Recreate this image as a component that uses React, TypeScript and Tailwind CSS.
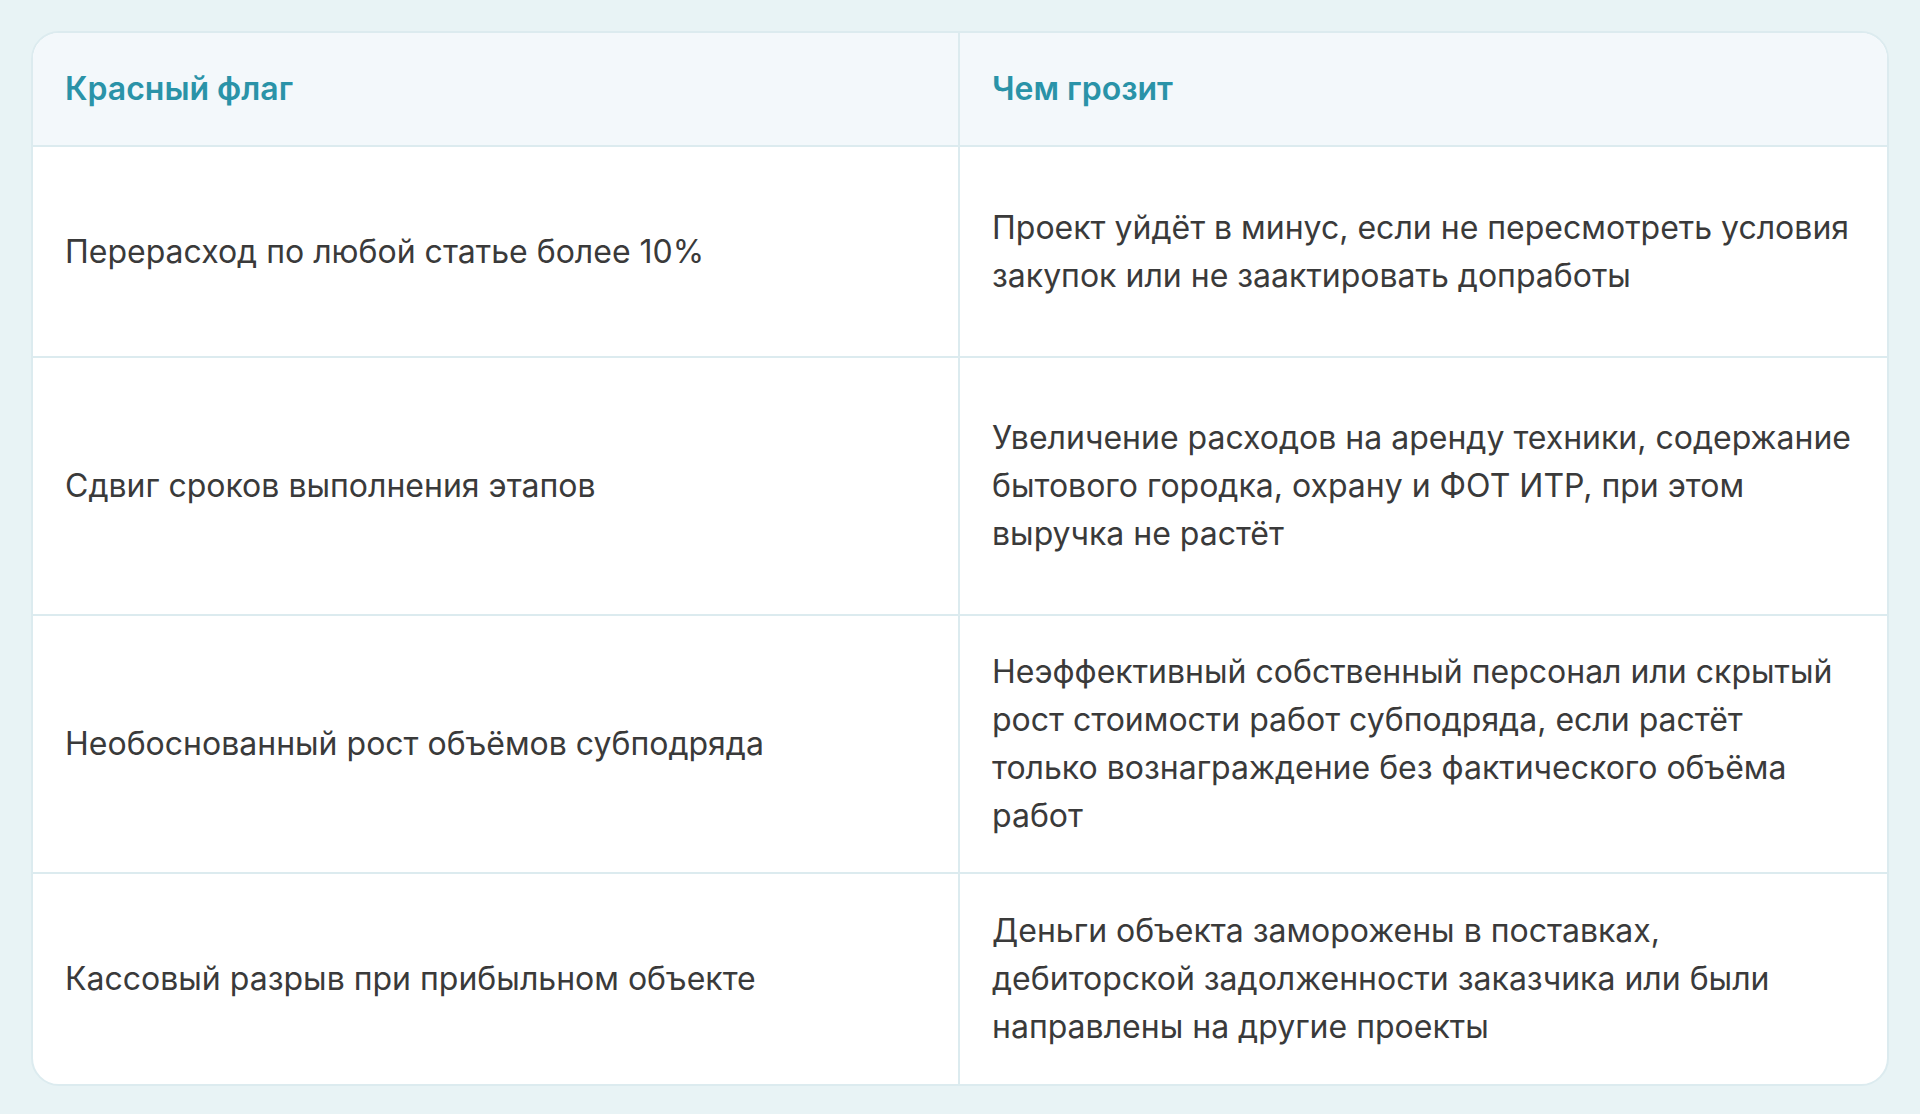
export default function App() {
  const rows: [string, string, string][] = [
    ["Перерасход по любой статье более 10%", "Проект уйдёт в минус, если не пересмотреть условия закупок или не заактировать допработы", "h-[211px]"],
    ["Сдвиг сроков выполнения этапов", "Увеличение расходов на аренду техники, содержание бытового городка, охрану и ФОТ ИТР, при этом выручка не растёт", "h-[258px]"],
    ["Необоснованный рост объёмов субподряда", "Неэффективный собственный персонал или скрытый рост стоимости работ субподряда, если растёт только вознаграждение без фактического объёма работ", "h-[258px]"],
    ["Кассовый разрыв при прибыльном объекте", "Деньги объекта заморожены в поставках, дебиторской задолженности заказчика или были направлены на другие проекты", "h-[210px]"],
  ];
  return (
    <div className="w-[1920px] h-[1114px] bg-[#e8f3f5] p-[31px]" style={{ fontFamily: "Inter, 'Noto Sans', sans-serif" }}>
      <div className="w-[1858px] rounded-[28px] border-2 border-[#dcebef] bg-white overflow-hidden">
        <div className="grid grid-cols-2 h-[114px] bg-[#f3f8fb] border-b-2 border-[#dcebef] text-[32px] font-semibold text-[#2a93a8]">
          <div className="flex items-center px-[32px] border-r-2 border-[#dcebef]">Красный флаг</div>
          <div className="flex items-center px-[32px]">Чем грозит</div>
        </div>
        {rows.map(([a, b, h], i) => (
          <div key={i} className={`grid grid-cols-2 ${h} text-[32px] leading-[48px] text-[#3a3a3a] ${i < 3 ? "border-b-2 border-[#dcebef]" : ""}`}>
            <div className="flex items-center px-[32px] border-r-2 border-[#dcebef]">{a}</div>
            <div className="flex items-center pl-[32px] pr-[36px]">{b}</div>
          </div>
        ))}
      </div>
    </div>
  );
}
